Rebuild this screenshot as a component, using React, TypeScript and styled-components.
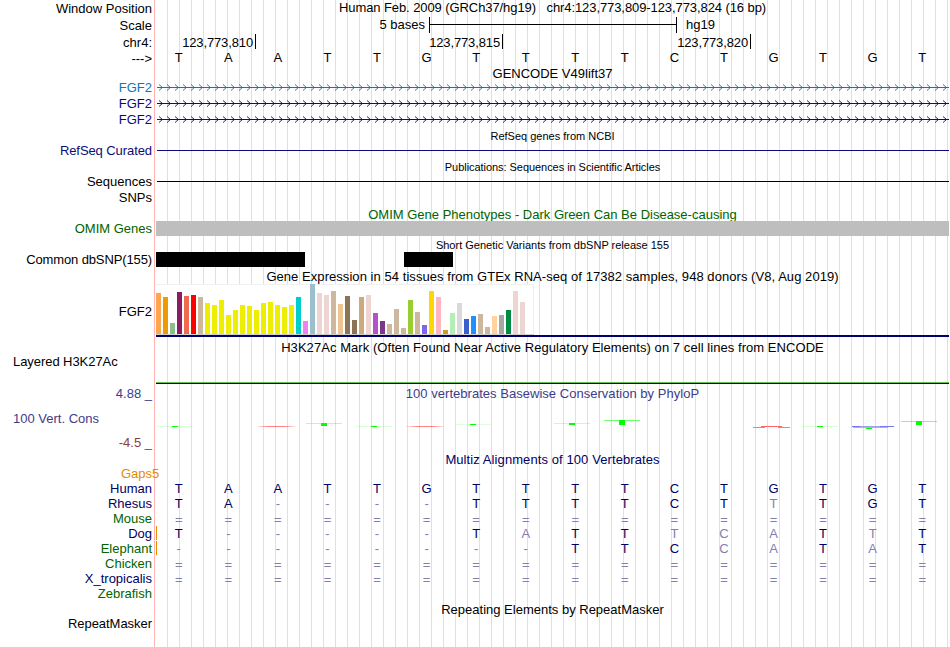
import React from "react";
import styled, { createGlobalStyle } from "styled-components";

const GlobalStyle = createGlobalStyle`
  body {
    margin: 0;
    background: #fff;
  }
`;

const Browser = styled.main`
  box-sizing: border-box;
  width: 950px;
  height: 647px;
  overflow: hidden;
  font-family: "Liberation Sans", Arial, Helvetica, sans-serif;
  font-size: 13px;
  line-height: 15px;
  color: #000;
  background:
    linear-gradient(to right, #fff 154px, #ffb4b4 154px 155px, #fff 155px) 0 0 / 156px 100% no-repeat,
    linear-gradient(to right, #dcdcff 1px, transparent 1px) 11px 0 / 12px 100% repeat-x;
`;

const Row = styled.section<{ $height: number }>`
  display: grid;
  grid-template-columns: 154px 793px;
  column-gap: 2px;
  height: ${(p) => p.$height}px;
`;

const Label = styled.div<{ $color?: string; $top?: number; $spacing?: number }>`
  padding-top: ${(p) => p.$top ?? 0}px;
  padding-right: 2px;
  letter-spacing: ${(p) => p.$spacing ?? 0}px;
  text-align: right;
  white-space: pre;
  color: ${(p) => p.$color ?? "#000"};
`;

const LeftLabel = styled(Label)`
  padding-left: 13px;
  text-align: left;
`;

const Title = styled.h2<{ $color?: string; $small?: boolean; $top?: number; $spacing?: number }>`
  grid-column: 2;
  margin: 0;
  padding-top: ${(p) => p.$top ?? 0}px;
  font-size: ${(p) => (p.$small ? 11 : 13)}px;
  font-weight: normal;
  letter-spacing: ${(p) => p.$spacing ?? 0}px;
  text-align: center;
  white-space: pre;
  color: ${(p) => p.$color ?? "#000"};
`;

const ScaleTrack = styled.div`
  display: flex;
  align-items: flex-start;
`;

const ScaleText = styled.span<{ $width: number }>`
  box-sizing: border-box;
  width: ${(p) => p.$width}px;
  padding-right: 4px;
  text-align: right;
`;

const ScaleBar = styled.div`
  box-sizing: border-box;
  width: 248px;
  height: 16px;
  margin-right: 9px;
  border: solid #000;
  border-width: 0 1px;
  background: linear-gradient(#000, #000) 0 7px / 100% 1px no-repeat;
`;

const RulerTrack = styled.div`
  display: flex;
`;

const RulerMark = styled.div<{ $width: number }>`
  box-sizing: border-box;
  width: ${(p) => p.$width}px;
  height: 15px;
  padding: 1px 2px 0 0;
  border-right: 1px solid #000;
  letter-spacing: -0.13px;
  text-align: right;
`;

const BaseTrack = styled.div<{ $color: string; $raised?: boolean }>`
  display: grid;
  grid-template-columns: repeat(16, 1fr);
  padding-right: 2px;
  margin: ${(p) => (p.$raised ? -1 : 0)}px 0 0 -2px;
  text-align: center;
  color: ${(p) => p.$color};
`;

const Base = styled.span<{ $faded?: boolean; $unaligned?: boolean }>`
  padding-top: ${(p) => (p.$unaligned ? 1 : 0)}px;
  ${(p) => p.$faded && "color: #8080b4;"}
`;

const AlignTrack = styled.div<{ $insert?: boolean }>`
  display: grid;
  background: linear-gradient(#e68a00, #e68a00) 0 0 / ${(p) => (p.$insert ? 1 : 0)}px 14px no-repeat;
`;

const GapCount = styled.span`
  margin-left: -4px;
  color: #e68a00;
`;

const GeneLine = styled.svg`
  display: block;
  margin-top: 4px;
`;

const ItemLine = styled.div<{ $color: string }>`
  height: 1px;
  margin: 7px 0 0 1px;
  background: ${(p) => p.$color};
`;

const BlockTrack = styled.div`
  display: flex;
  height: 15px;
`;

const Block = styled.div<{ $width: number; $before?: number; $color?: string }>`
  width: ${(p) => p.$width}px;
  margin-left: ${(p) => p.$before ?? 0}px;
  background: ${(p) => p.$color ?? "#000"};
`;

const Expression = styled.div`
  height: 51px;
  border-bottom: 2px solid #00006e;
`;

const ExpressionGraph = styled.div`
  box-sizing: border-box;
  display: flex;
  align-items: flex-end;
  gap: 2px;
  width: 378px;
  height: 51px;
  border-bottom: 1px solid #d0d0d0;
  background: #fff;
  box-shadow: inset -1px 1px #f0f0f0;
`;

const Tissue = styled.div<{ $color: string }>`
  flex: none;
  width: 5px;
  background: ${(p) => p.$color};
`;

const HistoneTrack = styled.div`
  align-self: end;
  height: 1px;
  border-top: 1px solid #64be50;
  background: #1e001e;
`;

const Axis = styled.div`
  display: flex;
  flex-direction: column;
  justify-content: space-between;
  padding: 2px 2px 0 0;
  height: 64px;
  white-space: pre;
`;

const AxisLine = styled.div<{ $color: string; $left?: boolean }>`
  text-align: ${(p) => (p.$left ? "left" : "right")};
  padding-left: ${(p) => (p.$left ? 13 : 0)}px;
  color: ${(p) => p.$color};
`;

const Conservation = styled.div`
  display: flex;
  flex-direction: column;
  gap: 1px;
`;

const NAVY = "#0c0c78";
const ALIGN = "#000064";
const GREEN = "#006400";

const sequence = "TAATTGTTTTCTGTGT";

const genes = [
  { label: "FGF2", color: "#0c78b4" },
  { label: "FGF2", color: NAVY },
  { label: "FGF2", color: NAVY },
];

// bar height in pixels and colour of each GTEx tissue
const tissues: [number, string][] = [
  [41, "#ffa54f"], [37, "#ee9a00"], [11, "#8fbc8f"], [42, "#8b1c62"],
  [38, "#ee6a50"], [39, "#ff0000"], [37, "#cdb79e"], [31, "#eeee00"],
  [29, "#eeee00"], [34, "#eeee00"], [19, "#eeee00"], [24, "#eeee00"],
  [29, "#eeee00"], [28, "#eeee00"], [24, "#eeee00"], [31, "#eeee00"],
  [32, "#eeee00"], [29, "#eeee00"], [27, "#eeee00"], [29, "#eeee00"],
  [37, "#00cdcd"], [13, "#ee82ee"], [50, "#9ac0cd"], [41, "#eed5d2"],
  [39, "#eed5d2"], [43, "#cdb79e"], [30, "#eec591"], [38, "#8b7355"],
  [14, "#8b7355"], [37, "#cdaa7d"], [39, "#eed5d2"], [21, "#b452cd"],
  [13, "#7a378b"], [10, "#cdb79e"], [25, "#cdb79e"], [6, "#cdb79e"],
  [34, "#9acd32"], [22, "#cdb79e"], [9, "#7a67ee"], [43, "#ffd700"],
  [37, "#ffb6c1"], [4, "#cd9b1d"], [21, "#b4eeb4"], [31, "#d9d9d9"],
  [15, "#3a5fcd"], [18, "#1e90ff"], [20, "#cdb79e"], [7, "#cdb79e"],
  [18, "#ffd39b"], [19, "#a6a6a6"], [24, "#008b45"], [43, "#eed5d2"],
  [32, "#eed5d2"], [0, "#ff00ff"],
];

// lower case bases differ from the human sequence
const species = [
  { name: "Human", color: ALIGN, bases: sequence },
  { name: "Rhesus", color: ALIGN, bases: "TA----TTTTCTtTGT" },
  { name: "Mouse", color: GREEN, bases: "================" },
  { name: "Dog", color: ALIGN, bases: "T-----TaTTtcaTtT", insert: true },
  { name: "Elephant", color: GREEN, bases: "--------TTCcaTaT", insert: true },
  { name: "Chicken", color: GREEN, bases: "================" },
  { name: "X_tropicalis", color: ALIGN, bases: "================" },
  { name: "Zebrafish", color: GREEN, bases: "" },
];

// positive scores: x, y, block height, opacity of the hairline
const peaks = [
  [1, 24, 1, 0.15],
  [150, 21, 3, 0.3],
  [200, 24, 1, 0.15],
  [299, 22, 1, 0.12],
  [398, 21, 2, 0.25],
  [448, 18, 5, 0.55],
  [646, 24, 1, 0.15],
  [745, 19, 4, 0.5],
];

function GeneModel({ color }: { color: string }) {
  const arrows = [];
  for (let x = 3; x < 793; x += 8) {
    arrows.push(`M${x} 0.5l3.5 3l-3.5 3`);
  }
  return (
    <GeneLine width="793" height="7" viewBox="0 0 793 7">
      <rect x="1" y="3" width="792" height="1" fill={color} />
      <path d={arrows.join("")} fill="none" stroke={color} strokeWidth="0.9" />
    </GeneLine>
  );
}

function PhyloP() {
  return (
    <svg width="793" height="48" viewBox="0 0 793 48" shapeRendering="crispEdges">
      <defs>
        <linearGradient id="fade">
          <stop offset="0" stopColor="#ff3c3c" stopOpacity="0.1" />
          <stop offset="0.3" stopColor="#ff3c3c" stopOpacity="0.65" />
          <stop offset="0.7" stopColor="#ff3c3c" stopOpacity="0.65" />
          <stop offset="1" stopColor="#ff3c3c" stopOpacity="0.1" />
        </linearGradient>
      </defs>
      {peaks.map(([x, y, h, opacity]) => (
        <g key={x} fill="#00ff00">
          <rect x={x} y={y} width="36" height="1" opacity={opacity} />
          <rect x={x + 15} y={y} width="6" height={h} />
        </g>
      ))}
      <rect x="101" y="24" width="39" height="1" fill="url(#fade)" />
      <rect x="250" y="24" width="38" height="1" fill="url(#fade)" />
      <rect x="597" y="25" width="12" height="1" fill="#ff7878" />
      <rect x="605" y="24" width="21" height="1" fill="#ff6464" />
      <rect x="622" y="25" width="12" height="1" fill="#ff7878" />
      <rect x="696" y="24" width="42" height="1" fill="#7878f0" />
      <rect x="704" y="24" width="20" height="1" fill="#a0a0f0" />
      <rect x="697" y="25" width="35" height="1" fill="#ff9696" />
      <rect x="710" y="26" width="6" height="1" fill="#00ff00" />
    </svg>
  );
}

function Bases({ bases, color, raised }: { bases: string; color: string; raised?: boolean }) {
  return (
    <BaseTrack $color={color} $raised={raised}>
      {bases.split("").map((base, i) => (
        <Base
          key={i}
          $faded={base === "-" || base === "=" || base !== base.toUpperCase()}
          $unaligned={base === "="}
        >
          {base.toUpperCase()}
        </Base>
      ))}
    </BaseTrack>
  );
}

export default function App() {
  return (
    <>
      <GlobalStyle />
      <Browser>
        <Row $height={17}>
          <Label $top={1}>Window Position</Label>
          <Title $spacing={-0.085}>
            {"Human Feb. 2009 (GRCh37/hg19)   chr4:123,773,809-123,773,824 (16 bp)"}
          </Title>
        </Row>
        <Row $height={17}>
          <Label $top={1}>Scale</Label>
          <ScaleTrack>
            <ScaleText $width={273}>5 bases</ScaleText>
            <ScaleBar />
            <span>hg19</span>
          </ScaleTrack>
        </Row>
        <Row $height={17}>
          <Label $top={1}>chr4:</Label>
          <RulerTrack>
            <RulerMark $width={100}>123,773,810</RulerMark>
            <RulerMark $width={247}>123,773,815</RulerMark>
            <RulerMark $width={248}>123,773,820</RulerMark>
          </RulerTrack>
        </Row>
        <Row $height={15}>
          <Label>{"--->"}</Label>
          <Bases bases={sequence} color="#000" raised />
        </Row>

        <Row $height={14}>
          <Title>GENCODE V49lift37</Title>
        </Row>
        {genes.map((gene, i) => (
          <Row key={i} $height={16}>
            <Label $color={gene.color}>{gene.label}</Label>
            <GeneModel color={gene.color} />
          </Row>
        ))}

        <Row $height={15}>
          <Title $small $top={1}>RefSeq genes from NCBI</Title>
        </Row>
        <Row $height={16}>
          <Label $color={NAVY} $spacing={-0.08}>RefSeq Curated</Label>
          <ItemLine $color={NAVY} />
        </Row>

        <Row $height={15}>
          <Title $small $top={1} $spacing={-0.05}>Publications: Sequences in Scientific Articles</Title>
        </Row>
        <Row $height={16}>
          <Label>Sequences</Label>
          <ItemLine $color="#000" />
        </Row>
        <Row $height={16}>
          <Label>SNPs</Label>
        </Row>

        <Row $height={15}>
          <Title $color={GREEN} $top={1}>OMIM Gene Phenotypes - Dark Green Can Be Disease-causing</Title>
        </Row>
        <Row $height={15}>
          <Label $color={GREEN}>OMIM Genes</Label>
          <BlockTrack>
            <Block $width={793} $color="#bebebe" />
          </BlockTrack>
        </Row>

        <Row $height={16}>
          <Title $small $top={2}>Short Genetic Variants from dbSNP release 155</Title>
        </Row>
        <Row $height={15}>
          <Label $spacing={-0.12}>Common dbSNP(155)</Label>
          <BlockTrack>
            <Block $width={149} />
            <Block $width={49} $before={99} />
          </BlockTrack>
        </Row>

        <Row $height={17}>
          <Title $top={2} $spacing={0.055}>
            Gene Expression in 54 tissues from GTEx RNA-seq of 17382 samples, 948 donors (V8, Aug 2019)
          </Title>
        </Row>
        <Row $height={53}>
          <Label $top={20}>FGF2</Label>
          <Expression>
            <ExpressionGraph>
              {tissues.map(([height, color], i) => (
                <Tissue key={i} $color={color} style={{ height }} />
              ))}
            </ExpressionGraph>
          </Expression>
        </Row>

        <Row $height={17}>
          <Title $top={3} $spacing={0.06}>
            H3K27Ac Mark (Often Found Near Active Regulatory Elements) on 7 cell lines from ENCODE
          </Title>
        </Row>
        <Row $height={30}>
          <LeftLabel $spacing={-0.06}>Layered H3K27Ac</LeftLabel>
          <HistoneTrack />
        </Row>

        <Row $height={68}>
          <Axis>
            <AxisLine $color="#3c3c8c">4.88 _</AxisLine>
            <AxisLine $color="#3c3c8c" $left>100 Vert. Cons</AxisLine>
            <AxisLine $color="#8c3c3c">-4.5 _</AxisLine>
          </Axis>
          <Conservation>
            <Title $color="#3c3c8c" $top={2} $spacing={0.03}>100 vertebrates Basewise Conservation by PhyloP</Title>
            <PhyloP />
          </Conservation>
        </Row>

        <Row $height={14}>
          <Title $color={ALIGN} $spacing={0.09}>Multiz Alignments of 100 Vertebrates</Title>
        </Row>
        <Row $height={15}>
          <Label $color="#e68a00">Gaps</Label>
          <GapCount>5</GapCount>
        </Row>
        {species.map((s) => (
          <Row key={s.name} $height={15}>
            <Label $color={s.color}>{s.name}</Label>
            <AlignTrack $insert={s.insert}>
              <Bases bases={s.bases} color={ALIGN} />
            </AlignTrack>
          </Row>
        ))}

        <Row $height={15}>
          <Title $top={1}>Repeating Elements by RepeatMasker</Title>
        </Row>
        <Row $height={15}>
          <Label $spacing={-0.04}>RepeatMasker</Label>
        </Row>
      </Browser>
    </>
  );
}
